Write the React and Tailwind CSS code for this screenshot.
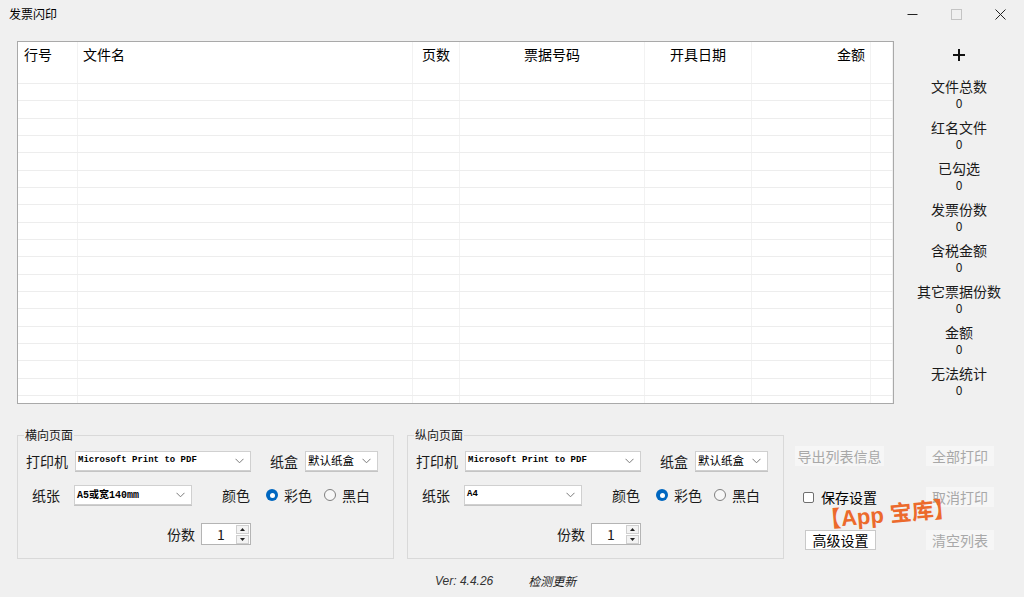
import React from "react";

const CJK = { fontFamily: '"Noto Sans CJK SC", "Liberation Sans", sans-serif' };

const columns = [
  { w: "w-[60px]", label: "行号", align: "justify-start pl-[6px]" },
  { w: "w-[335px]", label: "文件名", align: "justify-start pl-[5px]" },
  { w: "w-[47px]", label: "页数", align: "justify-center" },
  { w: "w-[185px]", label: "票据号码", align: "justify-center" },
  { w: "w-[107px]", label: "开具日期", align: "justify-center" },
  { w: "w-[119px]", label: "金额", align: "justify-end pr-[5px]" },
  { w: "w-[22px]", label: "", align: "" },
];

const stats = ["文件总数", "红名文件", "已勾选", "发票份数", "含税金额", "其它票据份数", "金额", "无法统计"];

function Chevron() {
  return (
    <svg width="9" height="6" viewBox="0 0 9 6" className="shrink-0">
      <polyline points="0.5,0.8 4.5,4.8 8.5,0.8" fill="none" stroke="#7a7a7a" strokeWidth="1" />
    </svg>
  );
}

function Select({ width, text, mono, size }) {
  return (
    <div
      className={`${width} h-[20px] bg-white border border-[#d0d0d0] flex items-center justify-between pl-[2px] pr-[6px] shadow-[0_1px_0_#c4c4c4]`}
    >
      {mono ? (
        <span
          className={`${size || "text-[9px]"} font-bold text-black`}
          style={{ fontFamily: '"Liberation Mono", "Noto Sans CJK SC", monospace' }}
        >
          {text}
        </span>
      ) : (
        <span className="text-[11.5px] text-black">{text}</span>
      )}
      <Chevron />
    </div>
  );
}

function Radio({ checked, label }) {
  return (
    <div className="flex items-center gap-[6px]">
      {checked ? (
        <span className="w-[12px] h-[12px] rounded-full bg-[#0067c0] flex items-center justify-center">
          <span className="w-[5px] h-[5px] rounded-full bg-white" />
        </span>
      ) : (
        <span className="w-[12px] h-[12px] rounded-full border border-[#7f7f7f] bg-[#f7f7f7]" />
      )}
      <span className="text-[14px] leading-[18px]">{label}</span>
    </div>
  );
}

function Spin() {
  return (
    <div className="w-[50px] h-[22px] bg-white border border-[#b4b4b4] flex items-center">
      <span className="flex-1 pl-[15px] text-[14px] leading-[18px]">1</span>
      <div className="w-[14px] h-full flex flex-col justify-center gap-[1px] pr-[1px]">
        <div className="h-[9px] border border-[#cfcfcf] bg-[#f3f3f3] flex items-center justify-center">
          <svg width="5" height="3" viewBox="0 0 5 3"><polygon points="2.5,0 5,3 0,3" fill="#222" /></svg>
        </div>
        <div className="h-[9px] border border-[#cfcfcf] bg-[#f3f3f3] flex items-center justify-center">
          <svg width="5" height="3" viewBox="0 0 5 3"><polygon points="0,0 5,0 2.5,3" fill="#222" /></svg>
        </div>
      </div>
    </div>
  );
}

function PageGroup({ title, paper }) {
  return (
    <fieldset className="w-[377px] h-[131px] border border-[#d9d9d9] px-0 pb-0">
      <legend className="ml-[6px] px-[1px] text-[12px] leading-[14px]">{title}</legend>
      {/* row 1 */}
      <div className="flex items-center h-[20px] mt-[9px] pl-[8px]">
        <span className="text-[14px] leading-[18px] w-[49px]">打印机</span>
        <Select width="w-[176px]" text="Microsoft Print to PDF" mono />
        <span className="text-[14px] leading-[18px] ml-[19px] w-[35px]">纸盒</span>
        <Select width="w-[73px]" text="默认纸盒" />
      </div>
      {/* row 2 */}
      <div className="flex items-center h-[20px] mt-[14px] pl-[14px]">
        <span className="text-[14px] leading-[18px] w-[42px]">纸张</span>
        <Select width="w-[118px]" text={paper} mono size={paper === "A4" ? "text-[9px]" : "text-[10px]"} />
        <span className="text-[14px] leading-[18px] ml-[30px] w-[44px]">颜色</span>
        <Radio checked label="彩色" />
        <div className="ml-[12px]">
          <Radio label="黑白" />
        </div>
      </div>
      {/* row 3 */}
      <div className="flex items-center h-[22px] mt-[18px] pl-[149px]">
        <span className="text-[14px] leading-[18px] w-[34px]">份数</span>
        <Spin />
      </div>
    </fieldset>
  );
}

function DisabledBtn({ width, children }) {
  return (
    <div className={`${width} h-[20px] bg-[#f6f6f6] text-[#a8a8a8] text-[14px] leading-[18px] flex items-center justify-center`}>
      {children}
    </div>
  );
}

export default function App() {
  return (
    <div className="w-[1024px] h-[597px] bg-[#f0f0f0] text-[#1a1a1a] flex flex-col overflow-hidden relative" style={CJK}>
      {/* Title bar */}
      <div className="h-[28px] flex items-center justify-between">
        <span className="pl-[9px] text-[12px] text-black">发票闪印</span>
        <div className="flex items-center h-full">
          <div className="w-[44px] flex justify-center">
            <svg width="11" height="11" viewBox="0 0 11 11"><line x1="0.5" y1="5.5" x2="10.5" y2="5.5" stroke="#222" strokeWidth="1" /></svg>
          </div>
          <div className="w-[44px] flex justify-center">
            <svg width="11" height="11" viewBox="0 0 11 11"><rect x="0.5" y="0.5" width="10" height="10" fill="none" stroke="#c4c4c4" strokeWidth="1" /></svg>
          </div>
          <div className="w-[46px] flex justify-center pr-[2px]">
            <svg width="11" height="11" viewBox="0 0 11 11"><path d="M0.5 0.5 L10.5 10.5 M10.5 0.5 L0.5 10.5" stroke="#222" strokeWidth="1" /></svg>
          </div>
        </div>
      </div>

      {/* Main row */}
      <div className="flex mt-[13px] pl-[17px]">
        <div className="w-[877px] h-[363px] bg-white border border-[#a9a9a9] overflow-hidden">
          <div className="flex h-[42px] border-b border-[#ededed]">
            {columns.map((c, i) => (
              <div key={i} className={`${c.w} ${c.align} flex items-start pt-[3px] border-r border-[#f2f2f2] text-[14px] leading-[18px] text-black`}>
                {c.label}
              </div>
            ))}
          </div>
          {Array.from({ length: 19 }).map((_, r) => (
            <div key={r} className={`flex ${r % 3 === 1 ? "h-[18px]" : "h-[17px]"} border-b border-[#ededed]`}>
              {columns.map((c, i) => (
                <div key={i} className={`${c.w} border-r border-[#f2f2f2]`} />
              ))}
            </div>
          ))}
        </div>

        {/* Stats panel */}
        <div className="flex-1 flex flex-col items-center pt-[5px]">
          <svg width="12" height="12" viewBox="0 0 12 12" className="mt-[3px]">
            <path d="M6 0 V12 M0 6 H12" stroke="#111" strokeWidth="2" />
          </svg>
          <div className="h-[16px]" />
          {stats.map((s) => (
            <div key={s} className="flex flex-col items-center mb-[8px]">
              <span className="text-[14px] leading-[18px]">{s}</span>
              <span className="text-[12px] leading-[15px]">0</span>
            </div>
          ))}
        </div>
      </div>

      {/* Bottom row */}
      <div className="flex items-start mt-[23px] pl-[17px]">
        <PageGroup title="横向页面" paper="A5或宽140mm" />
        <div className="ml-[13px]">
          <PageGroup title="纵向页面" paper="A4" />
        </div>

        <div className="ml-[11px] mt-[18px] flex flex-col">
          <div className="flex items-center h-[20px]">
            <DisabledBtn width="w-[89px]">导出列表信息</DisabledBtn>
            <div className="ml-[42px]">
              <DisabledBtn width="w-[68px]">全部打印</DisabledBtn>
            </div>
          </div>
          <div className="flex items-center h-[20px] mt-[21px]">
            <div className="w-[131px] flex items-center pl-[8px]">
              <span className="w-[11px] h-[11px] border border-[#6f6f6f] rounded-[2px] bg-white" />
              <span className="ml-[7px] text-[14px] leading-[18px] text-black">保存设置</span>
            </div>
            <DisabledBtn width="w-[68px]">取消打印</DisabledBtn>
          </div>
          <div className="flex items-center h-[20px] mt-[23px]">
            <div className="w-[131px] pl-[10px]">
              <div className="w-[71px] h-[20px] bg-white border border-[#c9c9c9] flex items-center justify-center text-[14px] leading-[18px] text-black">
                高级设置
              </div>
            </div>
            <DisabledBtn width="w-[68px]">清空列表</DisabledBtn>
          </div>
        </div>
      </div>

      {/* Footer */}
      <div className="flex items-center mt-[15px] ml-[435px] gap-[35px] text-[12px] leading-[14px] italic text-[#333]">
        <span style={{ fontFamily: '"Liberation Sans", sans-serif' }}>Ver: 4.4.26</span>
        <span className="text-[#222]">检测更新</span>
      </div>

      {/* Watermark */}
      <div
        className="absolute left-[819px] top-[504px] text-[22px] leading-[22px] font-bold text-[#ec6a2c] -rotate-[5deg] pointer-events-none"
        style={{ fontFamily: '"Liberation Sans", "Noto Sans CJK SC", sans-serif' }}
      >
        【App 宝库】
      </div>
    </div>
  );
}
